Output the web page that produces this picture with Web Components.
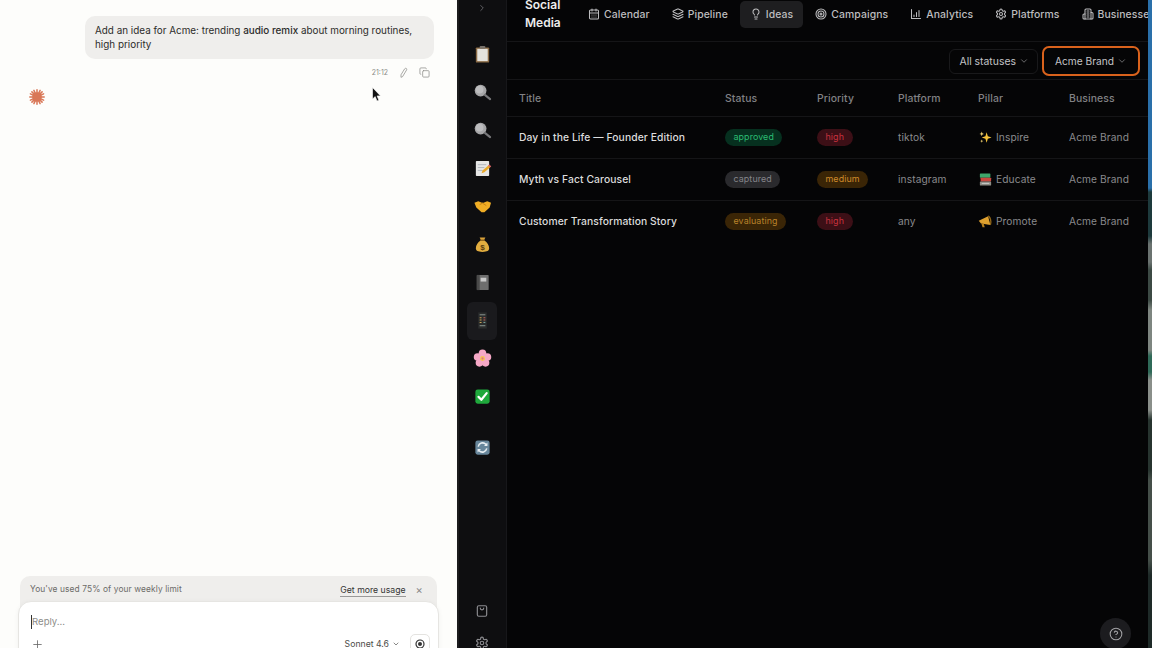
<!DOCTYPE html>
<html>
<head>
<meta charset="utf-8">
<title>Social Media</title>
<style>
  html, body { margin: 0; height: 100%; background: #050506; overflow: hidden; }
  body { font-family: Inter, "Liberation Sans", sans-serif; display: flex; width: 1152px; height: 648px; position: relative; }
</style>
</head>
<body>
<chat-panel>
  <user-bubble time="21:12">Add an idea for Acme: trending <b>audio remix</b> about morning routines,<br>high priority</user-bubble>
  <usage-composer slot="footer"></usage-composer>
</chat-panel>
<app-rail>
  <rail-icon name="clipboard"></rail-icon>
  <rail-icon name="search"></rail-icon>
  <rail-icon name="search"></rail-icon>
  <rail-icon name="memo"></rail-icon>
  <rail-icon name="handshake"></rail-icon>
  <rail-icon name="money"></rail-icon>
  <rail-icon name="notebook"></rail-icon>
  <rail-icon name="abacus" active></rail-icon>
  <rail-icon name="blossom"></rail-icon>
  <rail-icon name="check"></rail-icon>
  <rail-icon name="refresh" style="margin-top:13px"></rail-icon>
</app-rail>
<main-view>
  <top-nav>
    <nav-item icon="calendar">Calendar</nav-item>
    <nav-item icon="layers">Pipeline</nav-item>
    <nav-item icon="bulb" active>Ideas</nav-item>
    <nav-item icon="target">Campaigns</nav-item>
    <nav-item icon="chart">Analytics</nav-item>
    <nav-item icon="cog">Platforms</nav-item>
    <nav-item icon="building">Businesses</nav-item>
  </top-nav>
  <filter-bar>
    <filter-select>All statuses</filter-select>
    <filter-select focused>Acme Brand</filter-select>
  </filter-bar>
  <idea-row head title="Title" status="Status" priority="Priority" platform="Platform" pillar="Pillar" business="Business"></idea-row>
  <idea-row title="Day in the Life — Founder Edition" status="approved" priority="high" platform="tiktok" pillar="Inspire" emoji="sparkles" business="Acme Brand"></idea-row>
  <idea-row title="Myth vs Fact Carousel" status="captured" priority="medium" platform="instagram" pillar="Educate" emoji="books" business="Acme Brand"></idea-row>
  <idea-row title="Customer Transformation Story" status="evaluating" priority="high" platform="any" pillar="Promote" emoji="megaphone" business="Acme Brand"></idea-row>
</main-view>
<desktop-edge></desktop-edge>
<help-button></help-button>
<mouse-cursor></mouse-cursor>

<script>
const line = (inner, size = 14, sw = 2) => `<svg width="${size}" height="${size}" viewBox="0 0 24 24" fill="none" stroke="currentColor" stroke-width="${sw}" stroke-linecap="round" stroke-linejoin="round">${inner}</svg>`;
const COG = `<path d="M12.22 2h-.44a2 2 0 0 0-2 2v.18a2 2 0 0 1-1 1.73l-.43.25a2 2 0 0 1-2 0l-.15-.08a2 2 0 0 0-2.73.73l-.22.38a2 2 0 0 0 .73 2.73l.15.1a2 2 0 0 1 1 1.72v.51a2 2 0 0 1-1 1.74l-.15.09a2 2 0 0 0-.73 2.73l.22.38a2 2 0 0 0 2.73.73l.15-.08a2 2 0 0 1 2 0l.43.25a2 2 0 0 1 1 1.73V20a2 2 0 0 0 2 2h.44a2 2 0 0 0 2-2v-.18a2 2 0 0 1 1-1.73l.43-.25a2 2 0 0 1 2 0l.15.08a2 2 0 0 0 2.73-.73l.22-.39a2 2 0 0 0-.73-2.73l-.15-.08a2 2 0 0 1-1-1.74v-.5a2 2 0 0 1 1-1.74l.15-.09a2 2 0 0 0 .73-2.73l-.22-.38a2 2 0 0 0-2.73-.73l-.15.08a2 2 0 0 1-2 0l-.43-.25a2 2 0 0 1-1-1.73V4a2 2 0 0 0-2-2z"/><circle cx="12" cy="12" r="3"/>`;
const NAV_ICONS = {
  calendar: `<rect x="3" y="4" width="18" height="18" rx="2"/><path d="M8 2v4M16 2v4M3 10h18M8 14h.01M12 14h.01M16 14h.01M8 18h.01M12 18h.01M16 18h.01"/>`,
  layers: `<path d="m12.83 2.18a2 2 0 0 0-1.66 0L2.6 6.08a1 1 0 0 0 0 1.83l8.58 3.91a2 2 0 0 0 1.66 0l8.58-3.9a1 1 0 0 0 0-1.83Z"/><path d="m22 17.65-9.17 4.16a2 2 0 0 1-1.66 0L2 17.65"/><path d="m22 12.65-9.17 4.16a2 2 0 0 1-1.66 0L2 12.65"/>`,
  bulb: `<path d="M15 14c.2-1 .7-1.7 1.5-2.5 1-.9 1.5-2.2 1.5-3.5A6 6 0 0 0 6 8c0 1 .2 2.2 1.5 3.5.7.7 1.3 1.5 1.5 2.5"/><path d="M9 18h6M10 22h4"/>`,
  target: `<circle cx="12" cy="12" r="10"/><circle cx="12" cy="12" r="6"/><circle cx="12" cy="12" r="2"/>`,
  chart: `<path d="M3 3v18h18M13 17V9M18 17V5M8 17v-3"/>`,
  cog: COG,
  building: `<path d="M6 22V4a2 2 0 0 1 2-2h8a2 2 0 0 1 2 2v18Z"/><path d="M6 12H4a2 2 0 0 0-2 2v6a2 2 0 0 0 2 2h2M18 9h2a2 2 0 0 1 2 2v9a2 2 0 0 1-2 2h-2M10 6h4M10 10h4M10 14h4M10 18h4"/>`
};
// emoji drawn by hand, no colour emoji font in the sandbox
const EMOJI = {
  clipboard: `<rect x="3" y="2.5" width="14" height="16" rx="1" fill="#8a6a45"/><rect x="4.5" y="4" width="11" height="13" fill="#e4e2dc"/><rect x="7" y="1" width="6" height="3" rx="1" fill="#77716a"/>`,
  search: `<circle cx="8" cy="8" r="6.2" fill="#a6a6a8"/><circle cx="7" cy="7" r="4" fill="#bcbcbe"/><path d="M12.5 12.5l5.5 4.5" stroke="#77777a" stroke-width="2.2" stroke-linecap="round"/>`,
  memo: `<rect x="3" y="2" width="14" height="16" rx=".8" fill="#e6e6e6"/><path d="M5 6h9M5 9h7M5 12h5" stroke="#a9b0b8" stroke-width=".9"/><path d="M9 15l1-3 7-6 2 2-7 6z" fill="#e8a92c"/><path d="M16 6.8l1.2-1 2 2-1.2 1z" fill="#d2586a"/>`,
  handshake: `<path d="M1.5 6l4-1.5 4 1.5h1.5l4-1.5 4 1.5-1.5 5-5.5 5h-3l-5.5-5z" fill="#f0ad25"/><path d="M7 8l3-1.5 4 2.5" stroke="#c47f12" fill="none"/>`,
  money: `<path d="M7 2.5h6l-1.5 3.3h-3z" fill="#d9a23a"/><path d="M8 5.8h4c3 2 5 5 5 8 0 3-2 4-7 4s-7-1-7-4c0-3 2-6 5-8z" fill="#e2ad3f"/><rect x="7.7" y="4.8" width="4.6" height="1.3" fill="#8a5f1a"/><text x="10" y="15.5" font-size="8.5" font-weight="700" text-anchor="middle" fill="#5b3f10" font-family="Liberation Sans">$</text>`,
  notebook: `<rect x="4" y="2" width="12.5" height="16" rx="1" fill="#6e6e6e"/><rect x="4" y="2" width="3" height="16" fill="#4a4a4a"/><rect x="8" y="5" width="6" height="4" fill="#c9c9c9"/>`,
  abacus: `<rect x="5.5" y="1.5" width="9" height="17" fill="#2a2c2c"/><path d="M7 4h6M7 15.5h6" stroke="#8f9a96" stroke-width="1"/><path d="M7 7h2M7 9.5h2M7 12h2" stroke="#c9a253" stroke-width="1.1"/><path d="M11 7h2M11 9.5h2" stroke="#c2615a" stroke-width="1.1"/><path d="M11 12h2" stroke="#7fa8a0" stroke-width="1.1"/>`,
  blossom: `<g fill="#f6a8c6"><circle cx="10" cy="4.6" r="4"/><circle cx="15.2" cy="8.4" r="4"/><circle cx="13.2" cy="14.6" r="4"/><circle cx="6.8" cy="14.6" r="4"/><circle cx="4.8" cy="8.4" r="4"/></g><circle cx="10" cy="10" r="2.6" fill="#f7c94e"/><circle cx="10" cy="10" r="1.2" fill="#e2738f"/>`,
  check: `<rect x="2.5" y="2.5" width="15" height="15" rx="2.4" fill="#1fa83c"/><path d="M5.8 10.4l3 3 5.6-7" stroke="#fff" stroke-width="2.3" fill="none" stroke-linecap="round" stroke-linejoin="round"/>`,
  refresh: `<rect x="2.5" y="2.5" width="15" height="15" rx="2.4" fill="#67869b"/><path d="M5.5 9a4.7 4.7 0 0 1 8-2.4l1 1M14.5 11a4.7 4.7 0 0 1-8 2.4l-1-1" stroke="#e8eef2" stroke-width="1.6" fill="none"/><path d="M15.2 4.8v3.6h-3.6zM4.8 15.2v-3.6h3.6z" fill="#e8eef2"/>`,
  sparkles: `<path d="M11.5 3l1.6 5.2 5 1.8-5 1.8-1.6 5.2-1.6-5.2-5-1.8 5-1.8z" fill="#f5c33b"/><path d="M5 2l.8 2.4 2.2.8-2.2.8L5 8.4l-.8-2.4L2 5.2l2.2-.8zM5 12.5l.6 1.7 1.6.6-1.6.6-.6 1.7-.6-1.7-1.6-.6 1.6-.6z" fill="#f7d774"/>`,
  books: `<rect x="2.5" y="2" width="14" height="5.5" rx=".8" fill="#3ea76b"/><rect x="3.5" y="7.5" width="14" height="5" rx=".8" fill="#c9493f"/><rect x="2.5" y="12.5" width="15" height="5.5" rx=".8" fill="#8d8d85"/><path d="M5 15.2h10" stroke="#ddd"/>`,
  megaphone: `<path d="M1 9l12.5-6 3 11.5L4 12.5z" fill="#dfa12f"/><path d="M13.5 3c2.5 0 5 7.5 3 11.5" stroke="#8f6518" stroke-width="1.8" fill="none"/><path d="M4.5 12.5l1.5 5h3l-1.3-4.5z" fill="#b57f1f"/>`
};
const emoji = (name, size) => `<svg width="${size}" height="${size}" viewBox="0 0 20 20">${EMOJI[name]}</svg>`;

class ChatPanel extends HTMLElement {
  constructor() {
    super();
    this.attachShadow({ mode: "open" }).innerHTML = `
      <style>
        :host { display: flex; flex-direction: column; flex: 0 0 457px; height: 648px; background: #fdfdfb; overflow: hidden; border-right: 2px solid #1b1b1d; box-sizing: content-box; }
        .thread { flex: 1; min-height: 0; padding: 16px 23px 0 29px; }
        .star { display: block; margin-top: 10px; }
        .foot { flex: 0 0 72px; overflow: hidden; }
      </style>
      <div class="thread">
        <slot></slot>
        <svg class="star" width="16" height="16" viewBox="0 0 16 16" stroke="#d97757" stroke-width="1.5" stroke-linecap="round">
          <circle cx="8" cy="8" r="4.8" fill="#d97757" stroke="none"/>
          <path d="M8 .8v14.4M.8 8h14.4M2.9 2.9l10.2 10.2M13.1 2.9 2.9 13.1M4.9 1.4l6.2 13.2M11.1 1.4 4.9 14.6M1.4 4.9l13.2 6.2M14.6 4.9 1.4 11.1"/>
        </svg>
      </div>
      <div class="foot"><slot name="footer"></slot></div>`;
  }
}
customElements.define("chat-panel", ChatPanel);

class UserBubble extends HTMLElement {
  constructor() {
    super();
    this.attachShadow({ mode: "open" }).innerHTML = `
      <style>
        :host { display: block; color: #2c2c2a; }
        .bubble { margin-left: 56px; background: #efeeec; border-radius: 10px; padding: 7px 10px 8px; font-size: 9.9px; line-height: 14px; }
        ::slotted(b) { font-weight: 500; }
        .meta { display: flex; justify-content: flex-end; align-items: center; height: 14px; margin-top: 6px; padding-right: 4px; color: #8a8a86; font-size: 7px; }
        .meta svg { display: block; }
        .time { margin-right: 10px; }
        .pencil { margin-right: 10px; }
      </style>
      <div class="bubble"><slot></slot></div>
      <div class="meta">
        <span class="time">${this.getAttribute("time")}</span>
        <span class="pencil">${line(`<path d="M15 3.5a2.4 2.4 0 0 1 4 2.5L10 21l-3.5 1.5L6.5 18z"/>`, 11, 1.6)}</span>
        ${line(`<rect x="8" y="8" width="14" height="14" rx="2"/><path d="M4 16a2 2 0 0 1-2-2V4a2 2 0 0 1 2-2h10a2 2 0 0 1 2 2"/>`, 11, 1.6)}
      </div>`;
  }
}
customElements.define("user-bubble", UserBubble);

class UsageComposer extends HTMLElement {
  constructor() {
    super();
    this.attachShadow({ mode: "open" }).innerHTML = `
      <style>
        :host { display: block; padding: 0 18px; color: #555; }
        .usage { margin: 0 2px; height: 32px; box-sizing: border-box; padding: 6px 14px 0 10px; background: #efeeec; border-radius: 10px 10px 0 0; display: flex; justify-content: space-between; align-items: flex-start; font-size: 8.4px; line-height: 14px; color: #6c6b68; letter-spacing: .1px; }
        .right { display: flex; align-items: center; gap: 10px; }
        .more { color: #333; border-bottom: 1px solid #999; line-height: 12px; margin-top: 2px; font-size: 8.7px; letter-spacing: 0; }
        .x { color: #888; font-size: 11px; }
        .box { position: relative; margin-top: -7px; height: 64px; box-sizing: border-box; background: #fff; border: 1px solid #e6e5e2; border-radius: 13px; box-shadow: 0 1px 5px rgba(0,0,0,.05); padding: 13px 8px 0 12px; }
        .reply { font-size: 9.6px; line-height: 14px; color: #8d8d8a; border-left: 1px solid #333; }
        .tools { display: flex; align-items: center; margin-top: 4px; height: 22px; color: #666; }
        .model { margin-left: auto; display: flex; align-items: center; gap: 3px; font-size: 8.7px; color: #4d4d4a; margin-right: 10px; }
        .send { width: 20px; height: 20px; box-sizing: border-box; border: 1px solid #e4e3e0; border-radius: 5px; display: flex; align-items: center; justify-content: center; color: #333; }
      </style>
      <div class="usage">
        <span>You've used 75% of your weekly limit</span>
        <span class="right"><span class="more">Get more usage</span><span class="x">×</span></span>
      </div>
      <div class="box">
        <div class="reply">Reply...</div>
        <div class="tools">
          ${line(`<path d="M12 5v14M5 12h14"/>`, 13, 1.5)}
          <span class="model">Sonnet 4.6 ${line(`<path d="m6 9 6 6 6-6"/>`, 8, 2)}</span>
          <span class="send"><svg width="10" height="10" viewBox="0 0 10 10"><circle cx="5" cy="5" r="4" fill="none" stroke="#333" stroke-width="1.2"/><circle cx="5" cy="5" r="2" fill="#333"/></svg></span>
        </div>
      </div>`;
  }
}
customElements.define("usage-composer", UsageComposer);

class AppRail extends HTMLElement {
  constructor() {
    super();
    this.attachShadow({ mode: "open" }).innerHTML = `
      <style>
        :host { display: flex; flex-direction: column; flex: 0 0 48px; height: 648px; box-sizing: border-box; padding-right: 1px; background: #0e0e10; border-right: 1px solid #17171a; color: #6f6f73; align-items: center; overflow: hidden; }
        .chev { height: 16px; display: flex; align-items: center; justify-content: center; margin-bottom: 19px; }
        .list { display: flex; flex-direction: column; flex: 1; }
        .bottom { display: flex; flex-direction: column; align-items: center; gap: 18px; margin-bottom: -2px; color: #8c8c90; }
        svg { display: block; }
      </style>
      <div class="chev">${line(`<path d="m9 18 6-6-6-6"/>`, 10, 2)}</div>
      <div class="list"><slot></slot></div>
      <div class="bottom">
        ${line(`<rect x="4" y="3" width="16" height="18" rx="2.5"/><path d="M9 7a3 3 0 0 0 6 0"/>`, 14, 2)}
        ${line(COG, 14, 2)}
      </div>`;
  }
}
customElements.define("app-rail", AppRail);

class RailIcon extends HTMLElement {
  constructor() {
    super();
    this.attachShadow({ mode: "open" }).innerHTML = `
      <style>
        :host { display: flex; width: 30px; height: 38.1px; align-items: center; justify-content: center; border-radius: 6px; }
        :host([active]) { background: #1a1a1d; }
      </style>
      ${emoji(this.getAttribute("name"), 19)}`;
  }
}
customElements.define("rail-icon", RailIcon);

class MainView extends HTMLElement {
  constructor() {
    super();
    this.attachShadow({ mode: "open" }).innerHTML = `
      <style>
        :host { display: flex; flex-direction: column; flex: 0 0 641px; height: 648px; background: #050506; overflow: hidden; }
      </style>
      <slot></slot>`;
  }
}
customElements.define("main-view", MainView);

class TopNav extends HTMLElement {
  constructor() {
    super();
    this.attachShadow({ mode: "open" }).innerHTML = `
      <style>
        :host { display: flex; flex: 0 0 42px; box-sizing: border-box; align-items: center; padding: 0 0 13px 18px; border-bottom: 1px solid #151517; white-space: nowrap; overflow: hidden; }
        .brand { color: #ececec; font-size: 12px; font-weight: 600; line-height: 18px; width: 53px; flex: none; }
        nav { display: flex; align-items: center; gap: 2px; }
      </style>
      <div class="brand">Social<br>Media</div>
      <nav><slot></slot></nav>`;
  }
}
customElements.define("top-nav", TopNav);

class NavItem extends HTMLElement {
  constructor() {
    super();
    this.attachShadow({ mode: "open" }).innerHTML = `
      <style>
        :host { display: flex; align-items: center; gap: 4px; height: 27px; padding: 0 10px; border-radius: 5px; color: #bdbdbf; font-size: 10.4px; font-weight: 500; letter-spacing: .1px; }
        :host([active]) { background: #1e1e20; }
        svg { display: block; flex: none; }
      </style>
      ${line(NAV_ICONS[this.getAttribute("icon")], 12, 2.1)}
      <slot></slot>`;
  }
}
customElements.define("nav-item", NavItem);

class FilterBar extends HTMLElement {
  constructor() {
    super();
    this.attachShadow({ mode: "open" }).innerHTML = `
      <style>
        :host { display: flex; flex: 0 0 38px; box-sizing: border-box; align-items: center; justify-content: flex-end; gap: 4px; padding: 1px 8px 0 0; border-bottom: 1px solid #151517; }
      </style>
      <slot></slot>`;
  }
}
customElements.define("filter-bar", FilterBar);

class FilterSelect extends HTMLElement {
  constructor() {
    super();
    this.attachShadow({ mode: "open" }).innerHTML = `
      <style>
        :host { display: flex; align-items: center; gap: 3px; height: 25px; box-sizing: border-box; padding: 0 8px 0 9px; border: 1px solid #19191b; border-radius: 6px; color: #c4c4c6; font-size: 10.4px; }
        :host([focused]) { border: 2px solid #d9621c; border-radius: 7px; height: 30px; padding: 0 11px; font-size: 10.2px; }
        svg { display: block; color: #8a8a8c; }
      </style>
      <slot></slot>${line(`<path d="m6 9 6 6 6-6"/>`, 10, 1.8)}`;
  }
}
customElements.define("filter-select", FilterSelect);

class StatusPill extends HTMLElement {
  constructor() {
    super();
    this.attachShadow({ mode: "open" }).innerHTML = `
      <style>
        :host { display: inline-flex; align-items: center; height: 17px; padding: 0 8.5px; border-radius: 8.5px; font-size: 8.9px; letter-spacing: .1px; }
        :host([kind="approved"]) { background: #06301f; color: #2bbd73; }
        :host([kind="captured"]) { background: #2a2a2d; color: #85858a; }
        :host([kind="evaluating"]) { background: #3a2506; color: #b9822a; }
        :host([kind="high"]) { background: #3c0f16; color: #c8323f; }
        :host([kind="medium"]) { background: #3a2506; color: #d08b2a; }
      </style>
      <slot></slot>`;
  }
}
customElements.define("status-pill", StatusPill);

class IdeaRow extends HTMLElement {
  constructor() {
    super();
    const a = n => this.getAttribute(n) || "";
    const head = this.hasAttribute("head");
    const pill = v => head ? v : `<status-pill kind="${v}">${v}</status-pill>`;
    const pillar = head ? a("pillar") : `<span class="em">${emoji(a("emoji"), 15)}</span>${a("pillar")}`;
    this.attachShadow({ mode: "open" }).innerHTML = `
      <style>
        :host { display: grid; grid-template-columns: 206px 92px 81px 80px 91px 1fr; flex: 0 0 42px; box-sizing: border-box; padding: 0 0 1px 12px; align-items: center; border-bottom: 1px solid #151517; font-size: 10.2px; line-height: 14px; color: #8a8a8d; letter-spacing: .1px; white-space: nowrap; overflow: hidden; }
        :host([head]) { flex-basis: 37px; padding: 1px 0 0 12px; font-weight: 500; color: #818184; font-size: 10.4px; }
        :host(:last-child) { border-bottom-color: transparent; }
        .title { color: #dcdcdc; font-weight: 500; font-size: 10.3px; }
        :host([head]) .title { color: #818184; font-size: 10.4px; }
        .pillar { display: flex; align-items: center; gap: 3px; }
        .em { display: block; height: 15px; width: 15px; }
        svg { display: block; }
      </style>
      <div class="title">${a("title")}</div>
      <div>${pill(a("status"))}</div>
      <div>${pill(a("priority"))}</div>
      <div>${a("platform")}</div>
      <div class="pillar">${pillar}</div>
      <div>${a("business")}</div>`;
  }
}
customElements.define("idea-row", IdeaRow);

// sliver of the desktop wallpaper showing past the window
class DesktopEdge extends HTMLElement {
  constructor() {
    super();
    this.attachShadow({ mode: "open" }).innerHTML = `
      <style>
        :host { display: block; flex: 0 0 4px; height: 648px; background: linear-gradient(#2a70aa 0 188px, #1d3a3c 192px 236px, #6b7370 244px 262px, #3c4a44 270px 300px, #7e8680 310px 350px, #2f6a58 356px 372px, #8a8f8a 380px 410px, #27342f 420px 470px, #454f49 480px 560px, #1e2a28 575px); }
      </style>`;
  }
}
customElements.define("desktop-edge", DesktopEdge);

class HelpButton extends HTMLElement {
  constructor() {
    super();
    this.attachShadow({ mode: "open" }).innerHTML = `
      <style>
        :host { position: absolute; left: 1100px; top: 618px; width: 31px; height: 31px; border-radius: 50%; background: #1c1c1f; color: #a2a2a5; display: flex; align-items: center; justify-content: center; }
      </style>
      ${line(`<circle cx="12" cy="12" r="10"/><path d="M9.1 9a3 3 0 0 1 5.8 1c0 2-3 3-3 3M12 17h.01"/>`, 14, 1.8)}`;
  }
}
customElements.define("help-button", HelpButton);

class MouseCursor extends HTMLElement {
  constructor() {
    super();
    this.attachShadow({ mode: "open" }).innerHTML = `
      <style>
        :host { position: absolute; left: 372px; top: 86px; display: block; width: 9px; height: 15px; }
      </style>
      <svg width="9" height="15" viewBox="0 0 9 15"><path d="M.5.5v11.5l2.7-2.4 1.8 4.4 1.9-.8-1.8-4.3h3.4z" fill="#111" stroke="#fff" stroke-width=".6"/></svg>`;
  }
}
customElements.define("mouse-cursor", MouseCursor);
</script>
</body>
</html>
